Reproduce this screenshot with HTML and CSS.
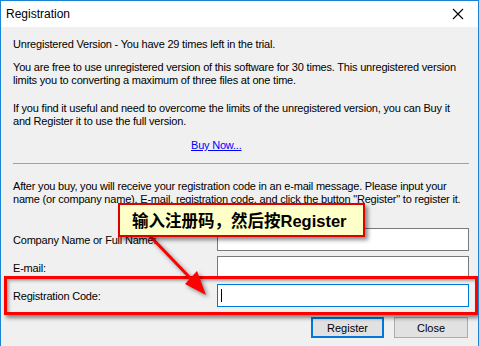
FILE: index.html
```html
<!DOCTYPE html>
<html lang="en">
<head>
    <meta charset="UTF-8">
    <title>Registration</title>
    <link rel="stylesheet" href="styles.css">
</head>
<body>
    <div class="window">
        <div class="titlebar">
            <span class="title">Registration</span>
            <svg class="close" width="12" height="12" viewBox="0 0 12 12">
                <path d="M1 1 L11 11 M11 1 L1 11" stroke="#000" stroke-width="1.1" fill="none"/>
            </svg>
        </div>

        <div class="content">
            <p class="status">Unregistered Version - You have 29 times left in the trial.</p>
            <p class="info">You are free to use unregistered version of this software for 30 times. This unregistered version<br>limits you to converting a maximum of three files at one time.</p>
            <p class="info gap">If you find it useful and need to overcome the limits of the unregistered version, you can Buy it<br>and Register it to use the full version.</p>
            <div class="buy"><a href="#">Buy Now...</a></div>
            <hr class="sep">
            <p class="info">After you buy, you will receive your registration code in an e-mail message. Please input your<br>name (or company name), E-mail, registration code, and click the button "Register" to register it.</p>

            <div class="form">
                <label>Company Name or Full Name:</label>
                <input type="text" class="field">
                <label>E-mail:</label>
                <input type="text" class="field">
                <label>Registration Code:</label>
                <div class="field focused"><span class="caret"></span></div>
            </div>

            <div class="buttons">
                <button class="btn default">Register</button>
                <button class="btn">Close</button>
            </div>
        </div>

        <!-- annotation overlays -->
        <div class="highlight"></div>
        <svg class="arrow" width="479" height="346" viewBox="0 0 479 346">
            <g class="arrow-shape">
                <line x1="148" y1="234" x2="196" y2="284" stroke="#f00" stroke-width="3"/>
                <polygon points="206,295 185,284 197,271" fill="#f00"/>
            </g>
        </svg>
        <div class="callout">输入注册码，然后按Register</div>
    </div>
</body>
</html>
```

FILE: styles.css
```css
body { margin: 0; background: #f0f0f0; }
.window {
    position: relative;
    width: 479px; height: 346px;
    box-sizing: border-box;
    border: 1px solid #1883d7; border-bottom: none;
    background: #f0f0f0;
    font-family: "Liberation Sans", Arial, sans-serif;
    font-size: 11px; color: #000;
    overflow: hidden;
}
.titlebar {
    height: 26px; background: #fff;
    display: flex; align-items: center; justify-content: space-between;
    padding: 0 14px 0 5px;
}
.title { font-size: 12px; }
.close { display: block; }
.content { padding: 11px 9px 0 12px; letter-spacing: -0.2px; }
p { margin: 0; line-height: 13px; white-space: nowrap; }
.info { margin-top: 10px; }
.info.gap { margin-top: 15px; }
.buy { margin-top: 11px; line-height: 13px; padding-left: 178px; }
.buy a { color: #0000ff; }
.sep { margin: 11px 0 16px; border: none; border-top: 1px solid #a0a0a0; height: 0; }

.form {
    margin-top: 22px;
    display: grid; grid-template-columns: 204px 252px;
    row-gap: 5px; align-items: center;
}
.field {
    height: 23px; box-sizing: border-box;
    border: 1px solid #7a7a7a; background: #fff;
    margin: 0; padding: 0 3px;
}
.field.focused { border-color: #0078d7; display: flex; align-items: center; }
.caret { width: 1px; height: 13px; background: #000; }

.buttons { display: flex; justify-content: flex-end; gap: 10px; margin-top: 10px; padding-right: 1px; }
.btn {
    width: 74px; height: 21px;
    font: inherit; font-size: 11px;
    background: #e1e1e1; border: 1px solid #adadad; padding: 0;
}
.btn.default { width: 73px; border: 2px solid #0078d7; }

.highlight {
    position: absolute; left: 3px; top: 275px;
    width: 474px; height: 39px; box-sizing: border-box;
    border: 3px solid #f00;
    box-shadow: 2px 3px 4px rgba(0,0,0,0.45), inset 2px 2px 3px rgba(0,0,0,0.3);
}
.arrow { position: absolute; left: -1px; top: -1px; }
.arrow-shape { filter: drop-shadow(2px 2px 2px rgba(0,0,0,0.45)); }
.callout {
    position: absolute; left: 117px; top: 202px;
    width: 247px; height: 34px; box-sizing: border-box;
    border: 2px solid #e00000; background: #ffffc8;
    box-shadow: 3px 3px 4px rgba(0,0,0,0.45);
    font-family: "Liberation Sans", "Noto Sans CJK SC", sans-serif;
    font-weight: bold; font-size: 16.5px;
    display: flex; align-items: center; padding-left: 12px;
}
```
